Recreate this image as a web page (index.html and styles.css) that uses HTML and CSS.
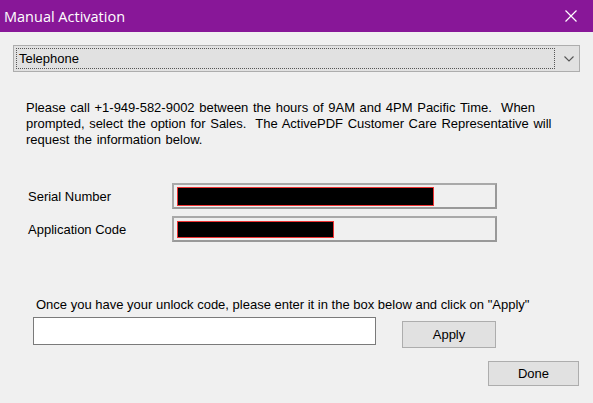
FILE: index.html
```html
<!DOCTYPE html>
<html lang="en">
<head>
    <meta charset="UTF-8">
    <title>Manual Activation</title>
    <link rel="stylesheet" href="styles.css">
</head>
<body>

    <div class="dialog">
        <div class="titlebar">
            <span class="title">Manual Activation</span>
            <svg class="close" width="12" height="12" viewBox="0 0 12 12">
                <path d="M0.5 0.5 L11.5 11.5 M11.5 0.5 L0.5 11.5" stroke="#fff" stroke-width="1.2" fill="none"/>
            </svg>
        </div>

        <div class="content">
            <div class="combo">
                <div class="combo-value">Telephone</div>
                <svg class="chevron" width="10" height="6" viewBox="0 0 10 6">
                    <path d="M0.5 0.5 L5 5 L9.5 0.5" stroke="#555" stroke-width="1.1" fill="none"/>
                </svg>
            </div>

            <p class="info">
                Please call +1-949-582-9002 between the hours of 9AM and 4PM Pacific Time.&nbsp; When
                prompted, select the option for Sales.&nbsp; The ActivePDF Customer Care Representative will
                request the information below.
            </p>

            <div class="fields">
                <label>Serial Number</label>
                <div class="field"><span class="hidden-value serial"></span></div>
                <label>Application Code</label>
                <div class="field"><span class="hidden-value appcode"></span></div>
            </div>

            <p class="hint">Once you have your unlock code, please enter it in the box below and click on "Apply"</p>

            <div class="unlock-row">
                <input type="text" class="unlock">
                <button class="btn apply">Apply</button>
            </div>

            <div class="footer">
                <button class="btn done">Done</button>
            </div>
        </div>
    </div>

</body>
</html>
```

FILE: styles.css
```css
body {
    margin: 0;
    font-family: "Liberation Sans", Arial, sans-serif;
    font-size: 13px;
    color: #000;
    background: #f0f0f0;
}

.dialog {
    width: 593px;
    height: 403px;
    display: flex;
    flex-direction: column;
    background: #f0f0f0;
    overflow: hidden;
}

.titlebar {
    height: 32px;
    background: #881798;
    color: #fff;
    display: flex;
    align-items: center;
    justify-content: space-between;
    padding: 0 16px 0 4px;
}

.title {
    font-family: "Open Sans", "Noto Sans", sans-serif;
    font-size: 14.5px;
}

.content {
    display: flex;
    flex-direction: column;
    padding: 13px 13px 0 13px;
}

/* dropdown */
.combo {
    height: 27px;
    box-sizing: border-box;
    border: 1px solid #adadad;
    background: #e1e1e1;
    display: flex;
    align-items: center;
    padding: 2px 5px 2px 2px;
}

.combo-value {
    flex: 1;
    height: 21px;
    box-sizing: border-box;
    border: 1px dotted #555;
    padding: 2px 0 0 2px;
    line-height: 15px;
}

.chevron {
    margin-left: 9px;
    margin-right: 0;
}

.info {
    margin: 28px 20px 0 13px;
    line-height: 16px;
    word-spacing: 1px;
}

/* serial / app code */
.fields {
    display: grid;
    grid-template-columns: 144px 325px;
    row-gap: 7px;
    margin: 35px 0 0 15px;
    align-items: center;
}

.fields label {
    padding-top: 1px;
}

.field {
    height: 26px;
    box-sizing: border-box;
    border: 2px solid #a9a9a9;
    border-right-color: #999;
    border-bottom-color: #999;
    background: #f0f0f0;
    padding: 2px 3px;
}

.hidden-value {
    display: block;
    height: 19px;
    box-sizing: border-box;
    background: #000;
    border: 1px solid #e33;
}

.serial { width: 257px; }
.appcode { width: 157px; margin-top: 1px; height: 17px; }

.hint {
    margin: 55px 0 0 23px;
}

.unlock-row {
    display: flex;
    align-items: flex-start;
    margin: 5px 0 0 20px;
}

.unlock {
    width: 343px;
    height: 28px;
    box-sizing: border-box;
    border: 1px solid #7a7a7a;
    background: #fff;
    margin: 0;
}

.btn {
    font-family: "Liberation Sans", Arial, sans-serif;
    font-size: 13px;
    background: #e1e1e1;
    border: 1px solid #adadad;
    padding: 0;
    color: #000;
}

.apply {
    width: 94px;
    height: 27px;
    margin: 4px 0 0 26px;
}

.footer {
    display: flex;
    justify-content: flex-end;
    margin-top: 13px;
}

.done {
    width: 91px;
    height: 25px;
    margin-right: 1px;
}
```
